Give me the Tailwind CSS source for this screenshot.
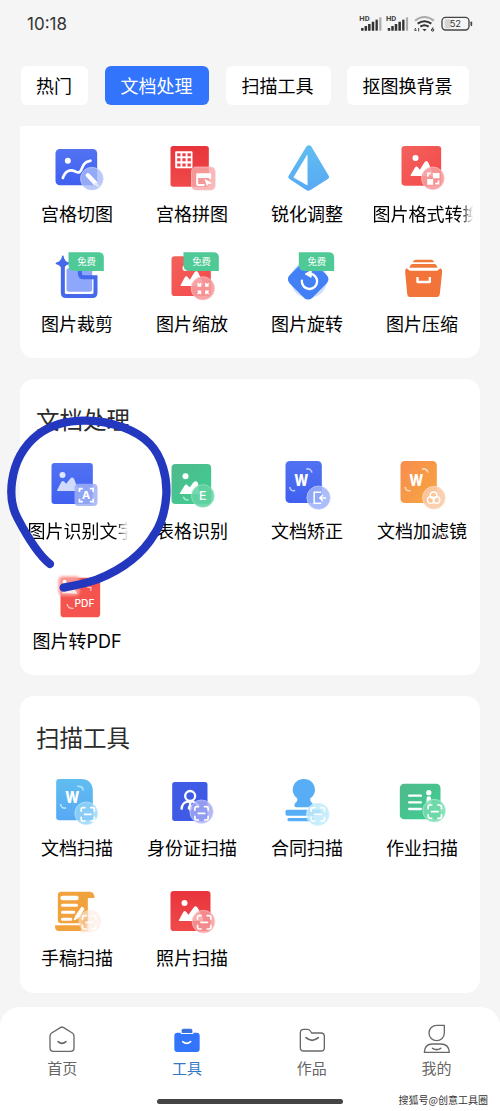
<!DOCTYPE html>
<html lang="zh-CN">
<head>
<meta charset="utf-8">
<meta name="viewport" content="width=device-width, initial-scale=1">
<title>工具</title>
<script src="https://cdn.jsdelivr.net/npm/@tailwindcss/browser@4"></script>
</head>
<body class="bg-[#f5f5f5] font-['Noto_Sans_CJK_SC',sans-serif] text-black">
<svg class="absolute size-0" aria-hidden="true">
  <defs>
    <linearGradient id="blue" x1="0" y1="0" x2="0" y2="1"><stop offset="0" stop-color="#5272f2"/><stop offset="1" stop-color="#3f60f0"/></linearGradient>
    <linearGradient id="red" x1="0" y1="0" x2="1" y2="1"><stop offset="0" stop-color="#f2625c"/><stop offset="1" stop-color="#f5484a"/></linearGradient>
    <linearGradient id="deep" x1="0" y1="0" x2="0" y2="1"><stop offset="0" stop-color="#e8343c"/><stop offset="1" stop-color="#f04a4a"/></linearGradient>
    <linearGradient id="orange" x1="0" y1="0" x2="1" y2="1"><stop offset="0" stop-color="#f78d4e"/><stop offset="1" stop-color="#f7a640"/></linearGradient>
    <linearGradient id="green" x1="0" y1="0" x2="1" y2="1"><stop offset="0" stop-color="#4fb98b"/><stop offset="1" stop-color="#3fce93"/></linearGradient>
    <linearGradient id="sky" x1="0" y1="0" x2="0" y2="1"><stop offset="0" stop-color="#60bdf0"/><stop offset="1" stop-color="#58a9f5"/></linearGradient>
    <filter id="soft" x="-30%" y="-30%" width="160%" height="160%"><feGaussianBlur stdDeviation="3"/></filter>
    <g id="free">
      <path d="M144 37H234Q250 37 250 53V93H162Q144 93 144 76Z" fill="#4fc996"/>
      <text x="198" y="75" text-anchor="middle" font-family="Noto Sans CJK SC, sans-serif" font-size="28" fill="#fff">免费</text>
    </g>
    <g id="scan" fill="none" stroke="#fff" stroke-width="5" stroke-linecap="round">
      <path d="M-20 -9V-14Q-20 -20 -14 -20H-9M9 -20H14Q20 -20 20 -14V-9M20 9V14Q20 20 14 20H9M-9 20H-14Q-20 20 -20 14V9M-10 0H10"/>
    </g>
  </defs>
</svg>
<div class="relative flex h-[1111px] w-[500px] flex-col overflow-hidden">
  <header class="flex h-[66px] shrink-0 items-start justify-between pl-[27px] pr-[27px] pt-[14px]">
    <span class="font-['Inter','Noto_Sans_CJK_SC',sans-serif] text-[17px] leading-[20px] text-[#333]">10:18</span>
    <svg class="h-[20px] w-[114px]" viewBox="328 42 342 60">
      <g id="sig">
        <text x="329" y="64" font-family="Roboto, sans-serif" font-size="21" font-weight="700" fill="#444" textLength="31" lengthAdjust="spacingAndGlyphs">HD</text>
        <path d="M338 84V92M348.500 78V92M359 72V92M370 65V92" stroke="#333" stroke-width="7.500"/>
        <path d="M381 59V92" stroke="#333" stroke-width="7"/>
        <path d="M392 52V92" stroke="#aaa" stroke-width="6.500"/>
      </g>
      <use href="#sig" x="80"/>
      <g fill="none" stroke-width="6">
        <path d="M496 62Q524 40 553 62" stroke="#aaa"/>
        <path d="M504 71Q524 56 545 71M512 80Q524 71 537 80" stroke="#333"/>
        <path d="M518 87H531L524.500 94Z" fill="#333" stroke="none"/>
        <path d="M498 84L495 91H501M507 84V94M550 82L546 90" stroke="#444" stroke-width="3"/>
        <circle cx="549" cy="90" r="3.500" stroke="#333" stroke-width="3"/>
      </g>
      <rect x="585" y="58" width="18" height="27" rx="4" fill="#d4d4d4"/>
      <rect x="577" y="52" width="81" height="38" rx="11" fill="none" stroke="#444" stroke-width="4"/>
      <path d="M665 67V76" stroke="#444" stroke-width="5" stroke-linecap="round"/>
      <text x="617" y="81" text-anchor="middle" font-family="Inter, sans-serif" font-size="28" fill="#333">52</text>
    </svg>
  </header>

  <div class="flex h-[60px] shrink-0 items-start gap-[17px] pl-[21px] text-[18px] leading-[38px]">
    <div class="h-[39px] w-[67px] rounded-md bg-white pr-px text-center">热门</div>
    <div class="h-[39px] w-[104px] rounded-md bg-[#3274fb] pr-px text-center text-white">文档处理</div>
    <div class="h-[39px] w-[105px] rounded-md bg-white pr-[2px] text-center">扫描工具</div>
    <div class="-ml-px h-[39px] w-[122px] rounded-md bg-white pr-px text-center">抠图换背景</div>
  </div>

  <main class="flex flex-col gap-[21px] px-5 font-['Inter','Noto_Sans_CJK_SC',sans-serif] text-[18px] leading-[28px]">
    <section class="h-[232px] rounded-b-[14px] bg-white pt-[14px]">
      <div class="grid auto-rows-[110px] grid-cols-4 [&_span]:mt-px [&_span]:pr-px">
        <div class="flex flex-col items-center">
          <svg class="h-[60px] w-[70px]" viewBox="67.5 45 210 180">
            <rect x="105" y="72" width="125" height="109" rx="13" fill="url(#blue)"/>
            <circle cx="142" cy="107" r="9" fill="#fff"/>
            <path d="M127 159C135 134 151 134 163 139S178 146 186 126S204 111 210 107" fill="none" stroke="#fff" stroke-width="8" stroke-linecap="round"/>
            <circle cx="214" cy="161" r="34" fill="#a9bcf7" fill-opacity=".8" stroke="#c6d2fa" stroke-width="2"/>
            <path d="M202 151L224 174" stroke="#fff" stroke-width="13" stroke-linecap="round"/><path d="M224 174L234 184" stroke="#dfe6fd" stroke-width="7"/>
          </svg>
          <span>宫格切图</span>
        </div>
        <div class="flex flex-col items-center">
          <svg class="h-[60px] w-[70px]" viewBox="412.5 45 210 180">
            <rect x="450" y="63" width="115" height="122" rx="8" fill="url(#deep)"/>
            <rect x="464" y="79" width="52" height="51" rx="3" fill="#fff"/>
            <path d="M470 89H511M470 104.500H511M470 120H511" stroke="#ea444a" stroke-width="9" stroke-dasharray="10 5.500"/>
            <rect x="513" y="126" width="71" height="69" rx="13" fill="#f7a8aa" fill-opacity=".82" stroke="#fbc6c8" stroke-width="2"/>
            <path d="M530 154H569V148H530V176Q530 180 535 180H552M530 156H569V162" fill="none" stroke="#fff" stroke-width="6" stroke-linejoin="round"/>
            <path d="M552 161L575 175L564 177L559 184Z" fill="#fff"/>
          </svg>
          <span>宫格拼图</span>
        </div>
        <div class="flex flex-col items-center">
          <svg class="h-[60px] w-[70px]" viewBox="67.5 45 210 180">
            <path d="M168 64Q175 58 182 64L235 153Q238 159 232 162L180 195Q173 199 167 195L117 162Q111 158 114 153Z" fill="url(#sky)"/>
            <path d="M170 91V180L130 157Z" fill="#fff" stroke="#fff" stroke-width="2" stroke-linejoin="round"/>
          </svg>
          <span>锐化调整</span>
        </div>
        <div class="flex flex-col items-center">
          <svg class="h-[60px] w-[70px]" viewBox="412.5 45 210 180">
            <rect x="453" y="63" width="119" height="119" rx="10" fill="url(#red)"/>
            <circle cx="495" cy="99" r="9" fill="#fff"/>
            <path d="M480 151L494 127Q498 121 503 128L508 134L521 113Q528 103 534 114L548 146L546 153H481Z" fill="#fff"/>
            <circle cx="547" cy="160" r="34" fill="#f69a9c" fill-opacity=".9" stroke="#fcc4c5" stroke-width="2"/>
            <path d="M547 144H567V160H547ZM530 162H548V179H530Z" fill="#fff"/>
            <path d="M532 155V145H541M564 166V176H554" fill="none" stroke="#fff" stroke-width="5"/>
          </svg>
          <span class="w-[100px] overflow-hidden whitespace-nowrap [mask-image:linear-gradient(to_right,#000_88%,transparent)]">图片格式转换</span>
        </div>
        <div class="flex flex-col items-center">
          <svg class="h-[60px] w-[70px]" viewBox="67.5 30 210 180">
            <rect x="138" y="84" width="77" height="71" rx="8" fill="#8ea7fa"/>
            <path d="M127 57V158Q127 168 137 168H215Q225 168 225 158V112H190Q178 112 178 98V92" fill="none" stroke="#4668ea" stroke-width="12"/>
            <path d="M127 49Q129 67 145 70Q129 74 127 90Q124 74 108 70Q124 67 127 49Z" fill="#4668ea" stroke="#4668ea" stroke-width="5" stroke-linejoin="round"/>
            <use href="#free"/>
          </svg>
          <span>图片裁剪</span>
        </div>
        <div class="flex flex-col items-center">
          <svg class="h-[60px] w-[70px]" viewBox="412.5 30 210 180">
            <rect x="453" y="49" width="118" height="119" rx="10" fill="url(#red)"/>
            <circle cx="495" cy="84" r="9" fill="#fff"/>
            <path d="M480 136L493 112Q498 105 503 113L508 119L521 98Q528 88 534 99L548 131L546 138H481Z" fill="#fff"/>
            <circle cx="547" cy="145" r="35" fill="#f69a9c" fill-opacity=".9" stroke="#fcc4c5" stroke-width="2"/>
            <path d="M531 130L540 138M540 129V138H531M565 130L556 138M556 129V138H565M531 162L540 154M531 154H540V163M565 162L556 154M565 154H556V163" fill="none" stroke="#fff" stroke-width="4.500"/>
            <use href="#free" x="345"/>
          </svg>
          <span>图片缩放</span>
        </div>
        <div class="flex flex-col items-center">
          <svg class="h-[60px] w-[70px]" viewBox="67.5 30 210 180">
            <circle cx="175" cy="119" r="55" fill="#cfe0fd"/>
            <rect x="125" y="70" width="96" height="96" rx="17" transform="rotate(45 173 118)" fill="#4480f5"/>
            <path d="M154 122A23 23 0 1 0 176 101" fill="none" stroke="#fff" stroke-width="7" stroke-linecap="round"/>
            <path d="M164 102L182 92V112Z" fill="#fff" stroke="#fff" stroke-width="3" stroke-linejoin="round"/>
            <use href="#free" x="1"/>
          </svg>
          <span>图片旋转</span>
        </div>
        <div class="flex flex-col items-center">
          <svg class="h-[60px] w-[70px]" viewBox="412.5 30 210 180">
            <path d="M495 59H543Q549 59 551 67H487Q489 59 495 59Z" fill="#f07a3c"/>
            <path d="M485 72H553Q559 73 561 83H477Q479 73 485 72Z" fill="#f07a3c"/>
            <path d="M468 85L478 92H560L570 85Q576 88 575 96L568 161Q567 171 557 171H480Q471 171 470 161L464 96Q463 88 468 85Z" fill="#f3743a"/>
            <path d="M501 111V126H538V111" fill="none" stroke="#fff" stroke-width="7" stroke-linejoin="round"/>
          </svg>
          <span>图片压缩</span>
        </div>
      </div>
    </section>

    <section class="h-[296px] rounded-[14px] bg-white">
      <h2 class="h-[78px] pl-4 pt-[22px] text-[23.5px] leading-[40px] text-[#2b2b2b]">文档处理</h2>
      <div class="grid auto-rows-[110px] grid-cols-4 [&_span]:mt-px [&_span]:pr-px">
        <div class="flex flex-col items-center">
          <svg class="h-[60px] w-[70px]" viewBox="127.5 231 210 180">
            <rect x="153" y="249" width="124" height="123" rx="9" fill="url(#blue)"/>
            <circle cx="186" cy="285" r="9" fill="#dfe6ff"/>
            <path d="M170 330L182 307Q187 300 192 306L197 311L209 296Q215 289 221 297L235 333H170Z" fill="#cfdafd"/>
            <rect x="222" y="311" width="69" height="67" rx="12" fill="#9fb0f6" fill-opacity=".85"/>
            <path d="M237 336V326H247M268 326H278V336M278 356V365H268M247 365H237V356" fill="none" stroke="#fff" stroke-width="5"/>
            <text x="257" y="358" text-anchor="middle" font-family="Inter, sans-serif" font-size="33" font-weight="700" fill="#fff">A</text>
          </svg>
          <span class="w-[100px] overflow-hidden whitespace-nowrap [mask-image:linear-gradient(to_right,#000_88%,transparent)]">图片识别文字</span>
        </div>
        <div class="flex flex-col items-center">
          <svg class="h-[60px] w-[70px]" viewBox="472.5 231 210 180">
            <rect x="513" y="252" width="119" height="120" rx="12" fill="url(#green)"/>
            <circle cx="555" cy="289" r="9" fill="#fff"/>
            <path d="M538 340L552 317Q557 310 562 317L568 322L579 307Q586 300 592 308L598 342H538Z" fill="#fff"/>
            <path d="M549 350Q551 361 564 360" fill="none" stroke="#b5ebd3" stroke-width="4"/>
            <circle cx="607" cy="348" r="34" fill="#64d2a2" fill-opacity=".88" stroke="#a5e6ca" stroke-width="2"/>
            <text x="607" y="361" text-anchor="middle" font-family="Inter, sans-serif" font-size="37" font-weight="500" fill="#fff">E</text>
          </svg>
          <span>表格识别</span>
        </div>
        <div class="flex flex-col items-center">
          <svg class="h-[60px] w-[70px]" viewBox="67.5 51 210 180">
            <rect x="105" y="63" width="109" height="126" rx="13" fill="url(#blue)"/>
            <text x="152" y="137" text-anchor="middle" font-family="Inter, sans-serif" font-size="49" font-weight="800" fill="#fff" textLength="42" lengthAdjust="spacingAndGlyphs">W</text>
            <path d="M167 87Q183 85 184 98M118 141Q119 154 134 152" fill="none" stroke="#bcc8fb" stroke-width="5"/>
            <circle cx="204" cy="173" r="35" fill="#9db3f8" fill-opacity=".86" stroke="#c6d2fc" stroke-width="2"/>
            <path d="M212 157H191V190H212M227 174H209M217 165L208 174L217 183" fill="none" stroke="#fff" stroke-width="4.500"/>
          </svg>
          <span>文档矫正</span>
        </div>
        <div class="flex flex-col items-center">
          <svg class="h-[60px] w-[70px]" viewBox="412.5 51 210 180">
            <rect x="450" y="63" width="109" height="126" rx="13" fill="url(#orange)"/>
            <text x="497" y="137" text-anchor="middle" font-family="Inter, sans-serif" font-size="49" font-weight="800" fill="#fff" textLength="42" lengthAdjust="spacingAndGlyphs">W</text>
            <path d="M514 87Q530 85 532 98M464 141Q465 154 480 152" fill="none" stroke="#fcd8b4" stroke-width="5"/>
            <circle cx="550" cy="173" r="34" fill="#fbcaa6" fill-opacity=".88" stroke="#fddec4" stroke-width="2"/>
            <g fill="none" stroke="#fff" stroke-width="4"><circle cx="549" cy="166" r="10"/><circle cx="541" cy="180" r="10"/><circle cx="558" cy="180" r="10"/></g>
          </svg>
          <span>文档加滤镜</span>
        </div>
        <div class="flex flex-col items-center">
          <svg class="h-[60px] w-[70px] overflow-visible" viewBox="127.5 561 210 180">
            <rect x="180" y="593" width="119" height="119" rx="11" fill="#f5544e"/>
            <rect x="173" y="588" width="65" height="60" rx="14" fill="#fa9d9a" fill-opacity=".85" filter="url(#soft)"/>
            <path d="M184 640L200 618L208 628L216 617L231 641Z" fill="#fff" fill-opacity=".8"/>
            <circle cx="192" cy="605" r="6" fill="#fff"/>
            <path d="M200 672Q202 687 219 685M260 622H271V633" fill="none" stroke="#fcc0be" stroke-width="4"/>
            <text x="252" y="682" text-anchor="middle" font-family="Inter, sans-serif" font-size="31" font-weight="500" fill="#fff" textLength="60" lengthAdjust="spacingAndGlyphs">PDF</text>
          </svg>
          <span>图片转PDF</span>
        </div>
      </div>
    </section>

    <section class="h-[297px] rounded-[14px] bg-white">
      <h2 class="h-[78px] pl-4 pt-[23px] text-[23.5px] leading-[40px] text-[#2b2b2b]">扫描工具</h2>
      <div class="grid auto-rows-[110px] grid-cols-4 [&_span]:mt-px [&_span]:pr-px">
        <div class="flex flex-col items-center">
          <svg class="h-[60px] w-[70px]" viewBox="67.5 222 210 180">
            <path d="M116 237H180Q217 237 217 275V352Q217 361 208 361H116Q107 361 107 352V246Q107 237 116 237Z" fill="url(#sky)"/>
            <text x="155" y="310" text-anchor="middle" font-family="Inter, sans-serif" font-size="49" font-weight="800" fill="#fff" textLength="42" lengthAdjust="spacingAndGlyphs">W</text>
            <path d="M170 259Q187 257 188 271M120 312Q121 326 137 324" fill="none" stroke="#b4e4f9" stroke-width="5"/>
            <circle cx="197" cy="340" r="34" fill="#94d5f8" fill-opacity=".8" stroke="#c2e8fb" stroke-width="2"/>
            <use href="#scan" x="202" y="343"/>
          </svg>
          <span>文档扫描</span>
        </div>
        <div class="flex flex-col items-center">
          <svg class="h-[60px] w-[70px]" viewBox="412.5 222 210 180">
            <rect x="455" y="246" width="106" height="117" rx="8" fill="#3f5be6"/>
            <circle cx="509" cy="288" r="15" fill="none" stroke="#fff" stroke-width="7"/>
            <path d="M483 329Q484 303 509 304Q526 305 534 318" fill="none" stroke="#fff" stroke-width="7"/>
            <path d="M503 305H515L512 312L517 325L509 334L501 325L506 312Z" fill="#fff"/>
            <circle cx="543" cy="335" r="35" fill="#a3a9f4" fill-opacity=".82" stroke="#d0d2fb" stroke-width="2"/>
            <use href="#scan" x="543" y="340"/>
          </svg>
          <span>身份证扫描</span>
        </div>
        <div class="flex flex-col items-center">
          <svg class="h-[60px] w-[70px]" viewBox="67.5 42 210 180">
            <path d="M160 57A32 32 0 0 1 180 115Q177 123 185 129Q191 139 184 142H137Q128 139 134 129Q143 123 140 115A32 32 0 0 1 160 57Z" fill="#58adf7"/>
            <rect x="105" y="149" width="106" height="18" rx="5" fill="#58adf7"/><rect x="111" y="174" width="80" height="10" rx="4" fill="#58adf7"/>
            <circle cx="202" cy="163" r="34" fill="#bfeafb" fill-opacity=".86" stroke="#dcf5fd" stroke-width="2"/>
            <use href="#scan" x="202" y="163"/>
          </svg>
          <span>合同扫描</span>
        </div>
        <div class="flex flex-col items-center">
          <svg class="h-[60px] w-[70px]" viewBox="412.5 42 210 180">
            <rect x="448" y="71" width="122" height="107" rx="13" fill="url(#green)"/>
            <path d="M476 107H511M476 127H511M476 147H511" stroke="#fff" stroke-width="7" stroke-linecap="round"/>
            <circle cx="535" cy="98" r="8" fill="#fff"/><path d="M535 116V132" stroke="#fff" stroke-width="14" stroke-linecap="round"/>
            <circle cx="551" cy="152" r="34" fill="#76dbae" fill-opacity=".84" stroke="#b9eed6" stroke-width="2"/>
            <use href="#scan" x="553" y="155"/>
          </svg>
          <span>作业扫描</span>
        </div>
        <div class="flex flex-col items-center">
          <svg class="h-[60px] w-[70px]" viewBox="67.5 42 210 180">
            <path d="M122 65H208Q222 66 222 84H202V160H122Q112 160 112 150V76Q112 65 122 65Z" fill="#f1a23c"/>
            <path d="M104 166H182V183H112Q102 181 104 166Z" fill="#f1a23c"/>
            <path d="M126 84H168M126 106H168M126 127H160M126 148H151" stroke="#fff" stroke-width="9" stroke-linecap="round"/>
            <path d="M126 84H168" stroke="#fff" stroke-width="13" stroke-linecap="round"/>
            <circle cx="208" cy="154" r="34" fill="#fde9e0" fill-opacity=".6"/>
            <path d="M180 160L200 140V184H180Z" fill="#f6b06a" filter="url(#soft)" opacity=".7"/>
            <path d="M161 150L166 137L184 111L191 116L174 143Z" fill="#fff" stroke="#fff" stroke-width="3"/>
            <use href="#scan" x="206" y="157"/>
          </svg>
          <span>手稿扫描</span>
        </div>
        <div class="flex flex-col items-center">
          <svg class="h-[60px] w-[70px]" viewBox="412.5 42 210 180">
            <rect x="450" y="63" width="120" height="120" rx="10" fill="url(#deep)"/>
            <circle cx="492" cy="99" r="9" fill="#fff"/>
            <path d="M475 151L488 127Q493 119 499 128L504 134L519 113Q526 104 532 114L548 146L546 153H475Z" fill="#fff"/>
            <circle cx="549" cy="155" r="34" fill="#f59a9c" fill-opacity=".82" stroke="#fcc8c9" stroke-width="2"/>
            <use href="#scan" x="551" y="157"/>
          </svg>
          <span>照片扫描</span>
        </div>
      </div>
    </section>
  </main>

  <nav class="mt-[14px] grid h-[105px] shrink-0 grid-cols-4 rounded-t-[20px] bg-white pr-px pt-[16px] text-[15px] leading-[22px] text-[#666]">
    <div class="flex flex-col items-center">
      <svg class="h-[34px] w-[32px]" viewBox="139 69 96 102" fill="none" stroke="#686868" stroke-width="4" stroke-linecap="round" stroke-linejoin="round">
        <path d="M182 83Q187 79 192 83L218 99Q223 102 223 108V143Q223 154 212 154H162Q151 154 151 143V108Q151 102 156 99Z"/><path d="M175 125Q187 135 199 125" stroke-width="5"/>
      </svg>
      <span>首页</span>
    </div>
    <div class="flex flex-col items-center text-[#3477c4]">
      <svg class="h-[34px] w-[32px]" viewBox="514 69 96 102">
        <path d="M551 86H573Q578 86 578 91V99H546V91Q546 86 551 86Z" fill="#3c70dc"/>
        <path d="M533 98H543V102H581V98H591Q600 98 600 107V147Q600 156 591 156H533Q524 156 524 147V107Q524 98 533 98Z" fill="#3274fb"/>
        <path d="M549 125Q561 135 573 125" fill="none" stroke="#fff" stroke-width="5" stroke-linecap="round"/>
      </svg>
      <span>工具</span>
    </div>
    <div class="flex flex-col items-center">
      <svg class="h-[34px] w-[32px]" viewBox="889 69 96 102" fill="none" stroke="#686868" stroke-width="4" stroke-linecap="round" stroke-linejoin="round">
        <path d="M912 88H923Q929 88 932 93L936 99H964Q974 99 974 109V143Q974 153 964 153H912Q902 153 902 143V98Q902 88 912 88Z"/><path d="M919 113Q937 129 956 113" stroke-width="5"/>
      </svg>
      <span>作品</span>
    </div>
    <div class="flex flex-col items-center">
      <svg class="h-[34px] w-[32px]" viewBox="1264 69 96 102" fill="none" stroke="#686868" stroke-width="4" stroke-linecap="round" stroke-linejoin="round">
        <path d="M1311 76H1334V99A23 23 0 1 1 1311 76Z"/><path d="M1274 157Q1275 132 1298 132H1323Q1348 132 1349 157Z"/><path d="M1299 145Q1311 153 1323 145" stroke-width="5"/>
      </svg>
      <span>我的</span>
    </div>
  </nav>

  <svg class="absolute left-0 top-[380px] h-[300px] w-[250px]" viewBox="0 0 750 900" fill="none">
    <path d="M150 552C122 530 84 474 53 415C36 384 30 350 36 305C44 245 74 195 115 163C156 133 205 121 258 122C335 123 410 150 450 192C485 228 502 290 499 345C495 400 484 430 466 458C430 520 375 566 290 599C260 609 230 616 191 623" stroke="#2438bf" stroke-width="25" stroke-linecap="round" stroke-linejoin="round"/>
  </svg>
  <div class="absolute left-[157px] top-[1099px] h-[4.5px] w-[186px] rounded-full bg-[#444]"></div>
  <div class="absolute right-[12px] top-[1092px] whitespace-nowrap text-[10px] leading-[15px] text-[#333]">搜狐号@创意工具圈</div>
</div>
</body>
</html>
